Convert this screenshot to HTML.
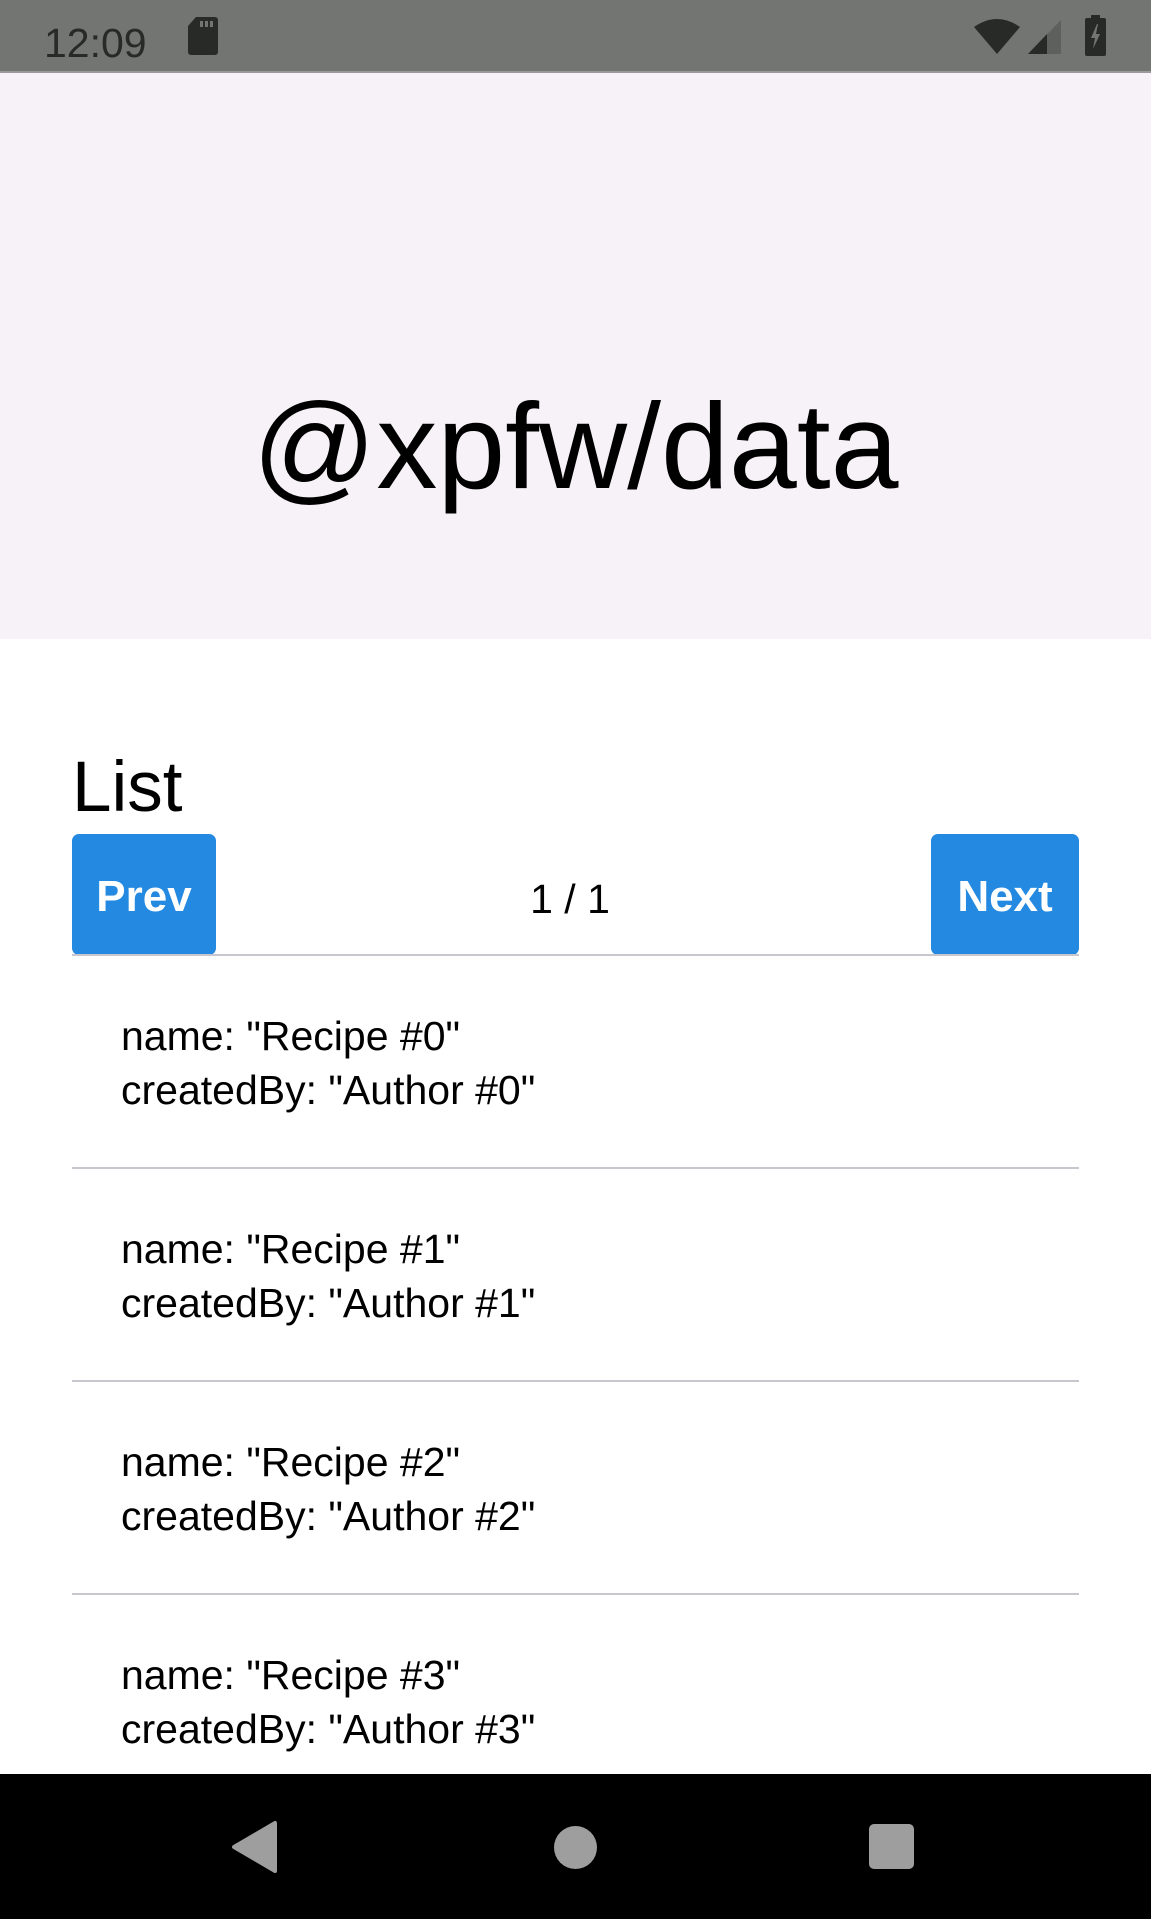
<!DOCTYPE html>
<html><head><meta charset="utf-8"><style>
html,body{margin:0;padding:0;}
body{width:1151px;height:1919px;position:relative;overflow:hidden;background:#fff;font-family:"Liberation Sans",Roboto,sans-serif;color:#000;}
.abs{position:absolute;}
.t{position:absolute;white-space:nowrap;line-height:1;}
.btn{position:absolute;background:#2489e0;border-radius:7px;color:#fff;font-weight:bold;font-size:44px;}
.div{position:absolute;left:72px;width:1007px;height:2px;background:#c9c7ce;}
.item{position:absolute;left:121px;font-size:41px;line-height:54px;white-space:nowrap;}
</style></head><body>
<div class="abs" style="left:0;top:0;width:1151px;height:71px;background:#737573;"></div>
<div class="abs" style="left:0;top:71px;width:1151px;height:2px;background:#9a9a9a;"></div>
<div class="t" style="left:44px;top:23px;font-size:41px;color:#272a27;">12:09</div>
<svg class="abs" style="left:186px;top:16px" width="34" height="40" viewBox="0 0 34 40"><path d="M10 1H29a3 3 0 0 1 3 3V36a3 3 0 0 1-3 3H5a3 3 0 0 1-3-3V10z" fill="#272a27"/><rect x="14" y="5" width="3" height="6" fill="#737573"/><rect x="19" y="5" width="3" height="6" fill="#737573"/><rect x="24" y="5" width="3" height="6" fill="#737573"/></svg>
<svg class="abs" style="left:972px;top:18px" width="50" height="38" viewBox="0 0 50 38"><path d="M25 36L2 9Q25-7 48 9Z" fill="#272a27"/></svg>
<svg class="abs" style="left:1027px;top:19px" width="36" height="36" viewBox="0 0 36 36"><path d="M1 35L34 1V35Z" fill="#5e605e"/><path d="M1 35L20 15V35Z" fill="#272a27"/></svg>
<svg class="abs" style="left:1084px;top:15px" width="24" height="42" viewBox="0 0 24 42"><rect x="7" y="0" width="9" height="4" fill="#272a27"/><rect x="1" y="3" width="21" height="38" rx="2" fill="#272a27"/><path d="M13 9L7 23H11L9 34L16 19H12L14 9Z" fill="#737573"/></svg>
<div class="abs" style="left:0;top:73px;width:1151px;height:566px;background:#f7f2f7;"></div>
<div class="t" style="left:0;width:1151px;text-align:center;top:385px;font-size:122px;line-height:1;">@xpfw/data</div>
<div class="t" style="left:72px;top:752px;font-size:71px;">List</div>
<div class="btn" style="left:72px;top:834px;width:144px;height:121px;"><div class="t" style="left:0;width:144px;text-align:center;top:41px;">Prev</div></div>
<div class="btn" style="left:931px;top:834px;width:148px;height:121px;"><div class="t" style="left:0;width:148px;text-align:center;top:41px;">Next</div></div>
<div class="t" style="left:470px;width:200px;text-align:center;top:879px;font-size:41px;">1 / 1</div>
<div class="div" style="top:954px;"></div>
<div class="item" style="top:1009px;">name: "Recipe #0"<br>createdBy: "Author #0"</div>
<div class="div" style="top:1167px;"></div>
<div class="item" style="top:1222px;">name: "Recipe #1"<br>createdBy: "Author #1"</div>
<div class="div" style="top:1380px;"></div>
<div class="item" style="top:1435px;">name: "Recipe #2"<br>createdBy: "Author #2"</div>
<div class="div" style="top:1593px;"></div>
<div class="item" style="top:1648px;">name: "Recipe #3"<br>createdBy: "Author #3"</div>
<div class="abs" style="left:0;top:1774px;width:1151px;height:145px;background:#000;"></div>
<svg class="abs" style="left:230px;top:1820px" width="50" height="54" viewBox="0 0 50 54"><path d="M45 3V51L4 27Z" fill="#9e9e9e" stroke="#9e9e9e" stroke-width="4" stroke-linejoin="round"/></svg>
<div class="abs" style="left:554px;top:1826px;width:43px;height:43px;border-radius:50%;background:#9e9e9e;"></div>
<div class="abs" style="left:869px;top:1824px;width:45px;height:45px;border-radius:5px;background:#9e9e9e;"></div>
</body></html>
